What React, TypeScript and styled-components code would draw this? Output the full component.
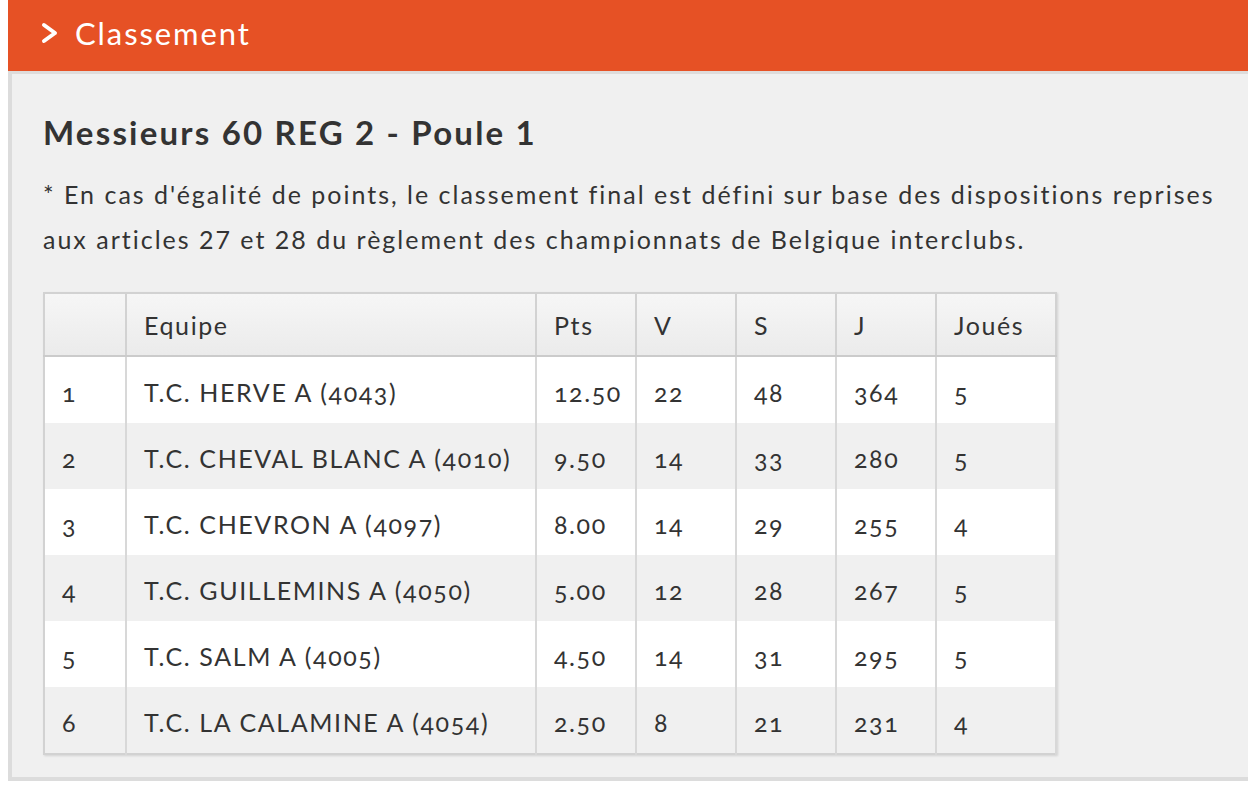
import React from 'react';
import styled, { createGlobalStyle } from 'styled-components';

const GlobalStyle = createGlobalStyle`
  html, body {
    margin: 0;
    background: #ffffff;
  }
  body {
    padding-left: 8px;
    font-family: Lato, "Open Sans", sans-serif;
    color: #333333;
  }
`;

const Section = styled.section`
  display: flex;
  flex-direction: column;
`;

const Banner = styled.header`
  display: flex;
  align-items: center;
  gap: 15px;
  height: 71px;
  padding: 0 0 6px 32px;
  box-sizing: border-box;
  background: #e65125;
  color: #ffffff;
  font-size: 31px;
  letter-spacing: 1.9px;
`;

const Panel = styled.div`
  background: #f0f0f0;
  border-top: 3px solid #dedcdb;
  border-left: 4px solid #dcdcdc;
  border-bottom: 4px solid #dcdcdc;
  padding: 36px 0 22px 31px;
`;

const Title = styled.h2`
  margin: 0 0 18px;
  font-size: 33px;
  font-weight: 700;
  line-height: 44px;
  letter-spacing: 2.2px;
  color: #333333;
`;

const Note = styled.p`
  margin: 0 0 30px;
  max-width: 1200px;
  font-size: 25px;
  line-height: 45px;
  letter-spacing: 2px;
  color: #333333;
`;

const Table = styled.table`
  border-collapse: collapse;
  border: 2px solid #d2d2d2;
  box-shadow: 1px 1px 2px rgba(0, 0, 0, 0.12);
  font-size: 25px;
  letter-spacing: 1.6px;
  font-variant-numeric: oldstyle-nums;
  table-layout: fixed;
`;

const HeadCell = styled.th<{ $w: number }>`
  width: ${(p) => p.$w - 19}px;
  height: 61px;
  padding: 0 0 0 17px;
  text-align: left;
  font-weight: 400;
  background: linear-gradient(#f6f6f6, #ebebeb);
  border-right: 2px solid #d2d2d2;
  border-bottom: 2px solid #cbcbcb;
  vertical-align: middle;
`;

const Row = styled.tr<{ $alt: boolean }>`
  background: ${(p) => (p.$alt ? '#f0f0f0' : '#ffffff')};
`;

const Cell = styled.td`
  height: 62px;
  padding: 4px 0 0 17px;
  border-right: 2px solid #d8d8d8;
  vertical-align: middle;
  white-space: nowrap;
`;

const Chevron = () => (
  <svg width="20" height="22" viewBox="0 0 20 22">
    <polyline
      points="4,3 15,11 4,19"
      fill="none"
      stroke="#ffffff"
      strokeWidth="4"
      strokeLinecap="round"
      strokeLinejoin="round"
    />
  </svg>
);

const columns = [
  { label: '', w: 82 },
  { label: 'Equipe', w: 410 },
  { label: 'Pts', w: 100 },
  { label: 'V', w: 100 },
  { label: 'S', w: 100 },
  { label: 'J', w: 100 },
  { label: 'Joués', w: 120 },
];

const rows = [
  ['1', 'T.C. HERVE A (4043)', '12.50', '22', '48', '364', '5'],
  ['2', 'T.C. CHEVAL BLANC A (4010)', '9.50', '14', '33', '280', '5'],
  ['3', 'T.C. CHEVRON A (4097)', '8.00', '14', '29', '255', '4'],
  ['4', 'T.C. GUILLEMINS A (4050)', '5.00', '12', '28', '267', '5'],
  ['5', 'T.C. SALM A (4005)', '4.50', '14', '31', '295', '5'],
  ['6', 'T.C. LA CALAMINE A (4054)', '2.50', '8', '21', '231', '4'],
];

export default function App() {
  return (
    <>
      <GlobalStyle />
      <Section>
        <Banner>
          <Chevron />
          Classement
        </Banner>
        <Panel>
          <Title>Messieurs 60 REG 2 - Poule 1</Title>
          <Note>
            * En cas d'égalité de points, le classement final est défini sur base des
            dispositions reprises aux articles 27 et 28 du règlement des championnats de
            Belgique interclubs.
          </Note>
          <Table>
            <thead>
              <tr>
                {columns.map((c) => (
                  <HeadCell key={c.label || 'rank'} $w={c.w}>
                    {c.label}
                  </HeadCell>
                ))}
              </tr>
            </thead>
            <tbody>
              {rows.map((r, i) => (
                <Row key={r[0]} $alt={i % 2 === 1}>
                  {r.map((v, j) => (
                    <Cell key={j}>{v}</Cell>
                  ))}
                </Row>
              ))}
            </tbody>
          </Table>
        </Panel>
      </Section>
    </>
  );
}
